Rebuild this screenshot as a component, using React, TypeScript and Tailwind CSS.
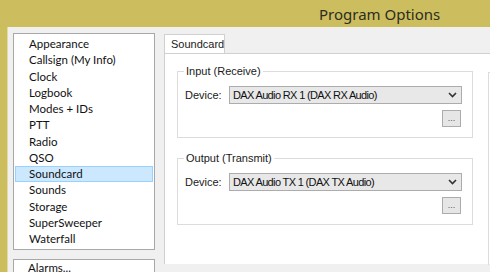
import React from "react";

const items = [
  "Appearance",
  "Callsign (My Info)",
  "Clock",
  "Logbook",
  "Modes + IDs",
  "PTT",
  "Radio",
  "QSO",
  "Soundcard",
  "Sounds",
  "Storage",
  "SuperSweeper",
  "Waterfall",
];

function Chevron() {
  return (
    <svg width="9" height="6" viewBox="0 0 9 6" className="shrink-0">
      <path d="M1 1 L4.5 4.5 L8 1" fill="none" stroke="#333" strokeWidth="1.6" />
    </svg>
  );
}

function Group({ label, device, top }: { label: string; device: string; top: string }) {
  return (
    <div className={`relative w-[296px] border border-[#dcdcdc] ${top}`}>
      <span className="absolute left-[6px] top-[-8px] bg-white px-[2px] text-[11px] leading-[14px] text-[#1a1a1a]">
        {label}
      </span>
      <div className="flex items-center pl-[7px] pt-[14px]">
        <span className="w-[44px] text-[11px] text-[#1a1a1a]">Device:</span>
        <div className="flex h-[18px] w-[233px] items-center justify-between border border-[#acacac] bg-[#e8e8e8] pl-[3px] pr-[4px]">
          <span className="text-[11px] leading-[14px] tracking-[-0.65px] text-[#111]">{device}</span>
          <Chevron />
        </div>
      </div>
      <div className="flex justify-end pr-[11px] pt-[6px] pb-[10px]">
        <div className="flex h-[17px] w-[19px] items-end justify-center border border-[#acacac] bg-[#e6e6e6] pb-[3px] text-[9px] leading-[9px] text-[#555]">
          ...
        </div>
      </div>
    </div>
  );
}

export default function App() {
  return (
    <div
      className="flex h-[272px] w-[490px] flex-col overflow-hidden bg-[#ccbd5f]"
      style={{ fontFamily: "'Liberation Sans', Arial, sans-serif" }}
    >
      <div className="flex h-[27px] shrink-0 items-center pl-[319px]">
        <span className="text-[15px] leading-[18px] text-[#2d2d22]" style={{ fontFamily: "'Noto Sans', sans-serif" }}>
          Program Options
        </span>
      </div>
      <div className="flex flex-1 pl-[7px]">
        <div className="flex flex-1 border-l border-[#e4dba0] bg-[#f0f0f0] pl-[5px] pt-[6px]">
          <div className="flex w-[142px] shrink-0 flex-col">
            <div
              className="h-[217px] border border-[#a8a8a8] bg-white px-[1px] pt-[2px]"
              style={{ fontFamily: "Lato, sans-serif" }}
            >
              {items.map((it) => (
                <div
                  key={it}
                  className={`flex h-[16.25px] items-center border pl-[13px] text-[11.5px] leading-[16px] text-[#111] ${
                    it === "Soundcard" ? "border-[#99d1ff] bg-[#cce8ff]" : "border-transparent"
                  }`}
                >
                  {it}
                </div>
              ))}
            </div>
            <div
              className="mt-[9px] h-[40px] border border-[#a8a8a8] bg-white pl-[14px] pt-[1px] text-[11.5px] leading-[14px] text-[#111]"
              style={{ fontFamily: "Lato, sans-serif" }}
            >
              Alarms...
            </div>
          </div>
          <div className="ml-[9px] flex flex-1 flex-col pt-[1px]">
            <div className="flex">
              <div className="flex h-[19px] w-[61px] items-center border border-b-0 border-[#d0d0d0] bg-white pl-[6px] text-[11px] text-[#1a1a1a]">
                Soundcard
              </div>
            </div>
            <div className="flex h-[211px] border-l border-t border-[#d0d0d0] bg-white pl-[12px] pt-[17px]">
              <div className="flex flex-col">
                <Group label="Input (Receive)" device="DAX Audio RX 1 (DAX RX Audio)" top="" />
                <Group label="Output (Transmit)" device="DAX Audio TX 1 (DAX TX Audio)" top="mt-[20px]" />
              </div>
              <div className="ml-[15px] mt-[1px] h-[193px] w-[20px] border-l border-t border-[#dcdcdc]" />
            </div>
          </div>
        </div>
      </div>
    </div>
  );
}
